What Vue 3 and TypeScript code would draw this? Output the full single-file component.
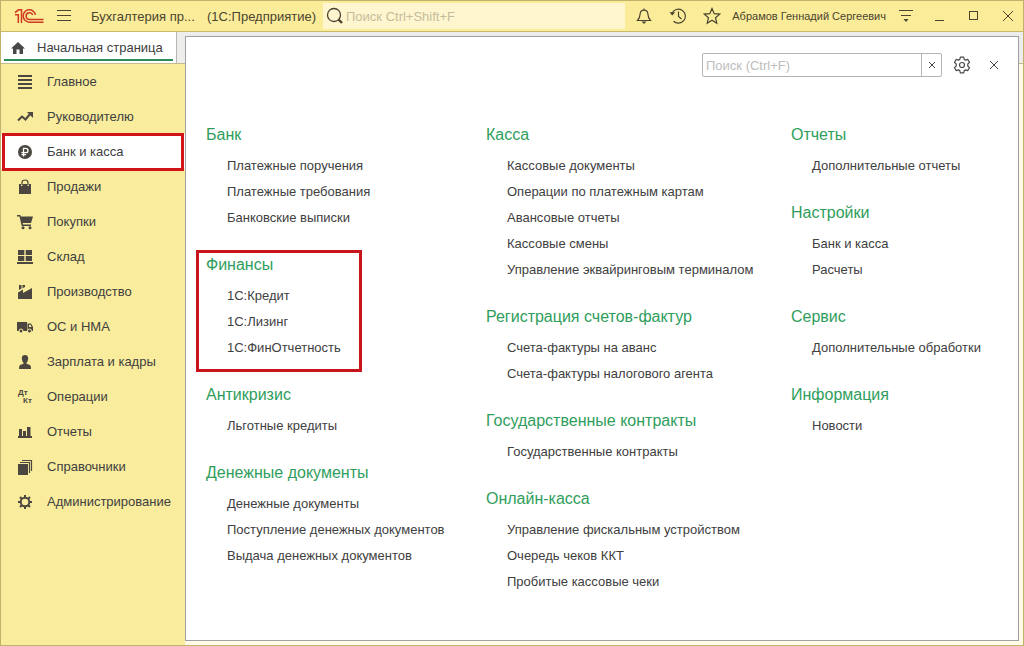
<script setup lang="ts">
import { ref } from 'vue'

interface Section { id: string; label: string }
interface Group { title: string; items: string[]; marked?: boolean }

const sections: Section[] = [
  { id: 'main', label: 'Главное' },
  { id: 'trend', label: 'Руководителю' },
  { id: 'bank', label: 'Банк и касса' },
  { id: 'sales', label: 'Продажи' },
  { id: 'cart', label: 'Покупки' },
  { id: 'stock', label: 'Склад' },
  { id: 'factory', label: 'Производство' },
  { id: 'truck', label: 'ОС и НМА' },
  { id: 'person', label: 'Зарплата и кадры' },
  { id: 'ops', label: 'Операции' },
  { id: 'chart', label: 'Отчеты' },
  { id: 'books', label: 'Справочники' },
  { id: 'gear', label: 'Администрирование' },
]
const active = ref('bank')
const globalQuery = ref('')
const query = ref('')

const columns: Group[][] = [
  [
    { title: 'Банк', items: ['Платежные поручения', 'Платежные требования', 'Банковские выписки'] },
    { title: 'Финансы', items: ['1С:Кредит', '1С:Лизинг', '1С:ФинОтчетность'], marked: true },
    { title: 'Антикризис', items: ['Льготные кредиты'] },
    { title: 'Денежные документы', items: ['Денежные документы', 'Поступление денежных документов', 'Выдача денежных документов'] },
  ],
  [
    { title: 'Касса', items: ['Кассовые документы', 'Операции по платежным картам', 'Авансовые отчеты', 'Кассовые смены', 'Управление эквайринговым терминалом'] },
    { title: 'Регистрация счетов-фактур', items: ['Счета-фактуры на аванс', 'Счета-фактуры налогового агента'] },
    { title: 'Государственные контракты', items: ['Государственные контракты'] },
    { title: 'Онлайн-касса', items: ['Управление фискальным устройством', 'Очередь чеков ККТ', 'Пробитые кассовые чеки'] },
  ],
  [
    { title: 'Отчеты', items: ['Дополнительные отчеты'] },
    { title: 'Настройки', items: ['Банк и касса', 'Расчеты'] },
    { title: 'Сервис', items: ['Дополнительные обработки'] },
    { title: 'Информация', items: ['Новости'] },
  ],
]
</script>

<template>
  <div class="window">
    <header class="titlebar">
      <svg class="logo" width="30" height="16" viewBox="0 0 30 16" fill="none" stroke="#cf3a22" stroke-width="1.500">
        <path d="M1 4.700L4.500 1.800H7.500V15M1 6.700H4.300V15" />
        <path d="M21.500 7A6.200 6.200 0 1 0 15.500 14.200H29.500" />
        <path d="M18.700 7A3.400 3.400 0 1 0 15.500 11.500H29.500" />
      </svg>
      <button class="icon-btn menu" aria-label="Меню">
        <svg width="14" height="12" viewBox="0 0 14 12" stroke="#4a4430" stroke-width="1"><path d="M0 .5H14M0 5.500H14M0 10.500H14" /></svg>
      </button>
      <span class="app-name">Бухгалтерия пр...</span>
      <span class="platform">(1С:Предприятие)</span>
      <label class="global-search">
        <svg width="18" height="18" viewBox="0 0 18 18" fill="none" stroke="#4a4430"><circle cx="8" cy="8" r="6.500" stroke-width="1.300" /><path d="M12.500 12.500L16 16" stroke-width="2.400" /></svg>
        <input v-model="globalQuery" type="text" placeholder="Поиск Ctrl+Shift+F" aria-label="Поиск Ctrl+Shift+F" />
      </label>
      <div class="tools">
        <button class="icon-btn" aria-label="Уведомления">
          <svg width="18" height="18" viewBox="0 0 18 18" fill="none" stroke="#4a4430" stroke-width="1.200"><path d="M2.500 13.500C4.500 11.500 5 10 5.200 6.500C5.400 4.300 6.800 3.200 9 3.200S12.600 4.300 12.800 6.500C13 10 13.500 11.500 15.500 13.500ZM9 1.500V3" /><path d="M6.500 14.500H11.500L9 17Z" fill="#4a4430" stroke="none" /></svg>
        </button>
        <button class="icon-btn" aria-label="История">
          <svg width="18" height="18" viewBox="0 0 18 18" fill="none" stroke="#4a4430" stroke-width="1.200"><path d="M3 6.300A7 7 0 1 1 4.500 14.200M9.500 4.500V9.500L12.500 12" /><path d="M.5 5.200H6.200L3.200 8.600Z" fill="#4a4430" stroke="none" /></svg>
        </button>
        <button class="icon-btn" aria-label="Избранное">
          <svg width="18" height="18" viewBox="0 0 18 18" fill="none" stroke="#4a4430" stroke-width="1.200"><path d="M9 1.500L11.200 6.700L16.700 7.100L12.500 10.700L13.800 16.200L9 13.200L4.200 16.200L5.500 10.700L1.300 7.100L6.800 6.700Z" /></svg>
        </button>
      </div>
      <span class="user">Абрамов Геннадий Сергеевич</span>
      <div class="window-buttons">
        <button class="icon-btn" aria-label="Настройки панели">
          <svg width="16" height="14" viewBox="0 0 16 14" stroke="#4a4430"><path d="M1 1.500H15M3 6.500H13" /><path d="M5.500 10H10.500L8 13Z" fill="#4a4430" stroke="none" /></svg>
        </button>
        <button class="icon-btn" aria-label="Свернуть">
          <svg width="10" height="10" viewBox="0 0 10 10" stroke="#4a4430"><path d="M0 9.500H9" /></svg>
        </button>
        <button class="icon-btn" aria-label="Развернуть">
          <svg width="10" height="10" viewBox="0 0 10 10" fill="none" stroke="#4a4430"><rect x=".5" y=".5" width="8" height="8" /></svg>
        </button>
        <button class="icon-btn" aria-label="Закрыть">
          <svg width="10" height="10" viewBox="0 0 10 10" stroke="#4a4430"><path d="M0 0L10 10M10 0L0 10" /></svg>
        </button>
      </div>
    </header>

    <div class="body">
      <aside class="side">
        <div class="tab-row">
          <button class="home-tab">
            <svg width="14" height="12" viewBox="0 0 14 12" fill="#484848"><path d="M7 0L14 6.500H12V12H8.500V7.500H5.500V12H2V6.500H0Z" /></svg>
            <span>Начальная страница</span>
          </button>
        </div>
        <nav class="sections">
          <button
            v-for="s in sections"
            :key="s.id"
            class="section"
            :class="{ active: s.id === active }"
            @click="active = s.id"
          >
            <svg width="16" height="16" viewBox="0 0 16 16" fill="#4b4740">
              <path v-if="s.id === 'main'" d="M1 1H15V3H1ZM1 5H15V7H1ZM1 9H15V11H1ZM1 13H15V15H1Z" />
              <template v-else-if="s.id === 'trend'">
                <path d="M1 11.500L5 7.500L8.500 10.500L13 5" fill="none" stroke="#4b4740" stroke-width="2" />
                <path d="M10 3H16V9Z" />
              </template>
              <template v-else-if="s.id === 'bank'">
                <circle cx="8" cy="8" r="7" />
                <path d="M6.500 12.500V4.300H8.800A2.200 2.200 0 0 1 8.800 8.700H4.500M4.500 10.700H9" fill="none" stroke="#fff" stroke-width="1.300" />
              </template>
              <template v-else-if="s.id === 'sales'">
                <path d="M2 5H4V7H5.500V5H10.500V7H12V5H14V15H2Z" />
                <path d="M5 6V3.500Q5 1 8 1T11 3.500V6" fill="none" stroke="#4b4740" stroke-width="1.200" />
              </template>
              <template v-else-if="s.id === 'cart'">
                <path d="M0 1H3.300L3.800 2.500H16L14 9H5.700L6 10.500H14V12H4.700L2.500 2.500H0Z" />
                <circle cx="6" cy="13.800" r="1.500" /><circle cx="13" cy="13.800" r="1.500" />
              </template>
              <path v-else-if="s.id === 'stock'" d="M1 1H7.300V6H1ZM8.700 1H15V6H8.700ZM1 7H7.300V12H1ZM8.700 7H15V12H8.700ZM0 13H16V15H0Z" />
              <path v-else-if="s.id === 'factory'" d="M1 15V8.500L6 5.500V9L15 4V15ZM2 1H4.500V4.500L2 6ZM5.500 1H8V3L5.500 4.300Z" />
              <template v-else-if="s.id === 'truck'">
                <path d="M0 3H10V12H0ZM10.500 4.500H14L16 8V12H10.500Z" />
                <path d="M12 5.700H13.500L14.600 8H12Z" fill="#f9ec9d" />
                <g stroke="#f9ec9d"><circle cx="4" cy="12" r="2" /><circle cx="12.500" cy="12" r="2" /></g>
              </template>
              <path v-else-if="s.id === 'person'" d="M8 1C10 1 11.200 2.200 11.200 4.300S10 8.500 9.500 8.700V9.700L13 11Q14 11.500 14 15H2Q2 11.500 3 11L6.500 9.700V8.700C6 8.500 4.800 6.400 4.800 4.300S6 1 8 1Z" />
              <g v-else-if="s.id === 'ops'" class="debit-credit"><text x="1" y="6">Дт</text><text x="6" y="14">Кт</text></g>
              <path v-else-if="s.id === 'chart'" d="M2 5H5V12H2ZM6 7H9V12H6ZM10 3H13.500V12H10ZM1 12H15V14H1Z" />
              <template v-else-if="s.id === 'books'">
                <path d="M1 5H11V16H1Z" />
                <path d="M3 3.500H12.500V14M5 1.500H14.500V12" fill="none" stroke="#4b4740" stroke-width="1.200" />
              </template>
              <template v-else>
                <circle cx="8" cy="8" r="4.300" fill="none" stroke="#4b4740" stroke-width="2" />
                <path d="M8 1V4M8 12V15M1 8H4M12 8H15M3 3L5 5M11 11L13 13M13 3L11 5M5 11L3 13" stroke="#4b4740" stroke-width="2" />
              </template>
            </svg>
            <span>{{ s.label }}</span>
          </button>
        </nav>
      </aside>

      <div class="desk">
        <main class="panel">
          <div class="panel-tools">
            <div class="panel-search">
              <input v-model="query" type="text" placeholder="Поиск (Ctrl+F)" aria-label="Поиск (Ctrl+F)" />
              <button class="clear" aria-label="Очистить" @click="query = ''">
                <svg width="6" height="6" viewBox="0 0 6 6" stroke="#444"><path d="M0 0L6 6M6 0L0 6" /></svg>
              </button>
            </div>
            <button class="icon-btn" aria-label="Настройки">
              <svg width="18" height="18" viewBox="0 0 18 18" fill="none" stroke="#4a4a4a" stroke-width="1.200" stroke-linejoin="round"><path d="M7.300 1.200H10.700L11.200 3.400L12.500 4.100L14.700 3.400L16.500 6.300L14.800 8V10L16.500 11.700L14.700 14.600L12.500 13.900L11.200 14.600L10.700 16.800H7.300L6.800 14.600L5.500 13.900L3.300 14.600L1.500 11.700L3.200 10V8L1.500 6.300L3.300 3.400L5.500 4.100L6.800 3.400Z" /><circle cx="9" cy="9" r="2.500" /></svg>
            </button>
            <button class="icon-btn" aria-label="Закрыть панель">
              <svg width="8" height="8" viewBox="0 0 8 8" stroke="#444"><path d="M0 0L8 8M8 0L0 8" /></svg>
            </button>
          </div>
          <div class="columns">
            <div v-for="(column, i) in columns" :key="i" class="column">
              <section v-for="g in column" :key="g.title" class="group" :class="{ marked: g.marked }">
                <h2>{{ g.title }}</h2>
                <ul>
                  <li v-for="item in g.items" :key="item"><a href="#">{{ item }}</a></li>
                </ul>
              </section>
            </div>
          </div>
        </main>
      </div>
    </div>
  </div>
</template>

<style>
body {
  margin: 0;
}
</style>

<style scoped>
.window {
  display: flex;
  flex-direction: column;
  box-sizing: border-box;
  min-height: 100vh;
  border: 1px solid #bfb36b;
  background: #f9ec9d;
  color: #404040;
  font-family: "Liberation Sans", Arial, sans-serif;
  font-size: 13px;
}
button,
input {
  margin: 0;
  padding: 0;
  border: 0;
  background: none;
  color: inherit;
  font: inherit;
}
svg {
  flex: none;
  display: block;
}
.titlebar {
  display: flex;
  align-items: center;
  height: 30px;
  padding: 0 10px 0 13px;
  border-bottom: 1px solid #c9b96a;
  background: #faec99;
  color: #4a4430;
  white-space: nowrap;
}
.icon-btn {
  display: flex;
  align-items: center;
  justify-content: center;
}
.menu {
  margin-left: 13px;
}
.app-name {
  width: 116px;
  margin-left: 20px;
}
.platform {
  width: 112px;
}
.global-search {
  display: flex;
  flex: 1;
  align-items: center;
  gap: 2px;
  height: 26px;
  margin-left: 4px;
  padding-left: 3px;
  background: #fff6cf;
}
.global-search input {
  flex: 1;
  min-width: 0;
  outline: none;
}
.global-search input::placeholder {
  color: #c4bd9c;
  opacity: 1;
}
.tools {
  display: flex;
  gap: 16px;
  margin-left: 10px;
}
.user {
  margin-left: 11px;
  font-size: 11px;
}
.window-buttons {
  display: flex;
  align-items: center;
  gap: 24px;
  margin-left: 12px;
}
.window-buttons .icon-btn:first-child {
  margin-right: -3px;
}
.body {
  display: flex;
  flex: 1;
}
.side {
  flex: none;
  width: 184px;
}
.tab-row {
  box-sizing: border-box;
  height: 32px;
  padding-right: 8px;
  border-bottom: 1px solid #c2bb90;
  background: #ededeb;
}
.home-tab {
  display: flex;
  align-items: center;
  gap: 12px;
  position: relative;
  width: 100%;
  height: 31px;
  padding-left: 10px;
  border-right: 1px solid #b5b5b5;
  background: #fff;
  white-space: nowrap;
}
.home-tab::after {
  position: absolute;
  right: 3px;
  bottom: 2px;
  left: 3px;
  height: 2px;
  background: #2c8c5a;
  content: "";
}
.sections {
  display: flex;
  flex-direction: column;
}
.section {
  display: flex;
  align-items: center;
  gap: 14px;
  position: relative;
  height: 35px;
  padding-left: 16px;
  text-align: left;
  white-space: nowrap;
}
.section.active {
  background: #fff;
}
.section.active::after {
  position: absolute;
  inset: -1px 1px -2px 1px;
  border: 3px solid #d01418;
  content: "";
}
.debit-credit {
  font-size: 8px;
  font-weight: 700;
}
.desk {
  display: flex;
  flex: 1;
  padding: 4px 4px 4px 0;
  background: linear-gradient(#ededeb 31px, #c2bb90 31px, #c2bb90 32px, #fffbe6 32px);
}
.panel {
  flex: 1;
  border: 1px solid #a0a0a4;
  background: #fff;
}
.panel-tools {
  display: flex;
  align-items: center;
  justify-content: flex-end;
  gap: 11px;
  padding: 16px 20px 0 0;
}
.panel-search {
  display: flex;
  box-sizing: border-box;
  width: 240px;
  height: 24px;
  border: 1px solid #b4b4b4;
  border-radius: 2px;
}
.panel-search input {
  flex: 1;
  min-width: 0;
  padding-left: 3px;
  outline: none;
}
.panel-search input::placeholder {
  color: #bdbdbd;
  opacity: 1;
}
.clear {
  display: flex;
  align-items: center;
  justify-content: center;
  width: 20px;
  border-left: 1px solid #b4b4b4;
}
.panel-tools .icon-btn:last-child {
  margin-left: 8px;
}
.columns {
  display: grid;
  grid-template-columns: 280fr 305fr 227fr;
  padding: 45px 0 0 20px;
}
.group {
  position: relative;
  margin-bottom: 21px;
}
.group.marked::after {
  position: absolute;
  inset: -2px auto -11px -10px;
  width: 160px;
  border: 3px solid #c8151b;
  content: "";
  pointer-events: none;
}
h2 {
  margin: 0 0 5px;
  color: #2f9e5c;
  font-size: 16px;
  font-weight: 400;
  line-height: 26px;
}
ul {
  margin: 0;
  padding: 0 0 0 21px;
  list-style: none;
}
li {
  line-height: 26px;
  white-space: nowrap;
}
a {
  color: inherit;
  text-decoration: none;
}
</style>
